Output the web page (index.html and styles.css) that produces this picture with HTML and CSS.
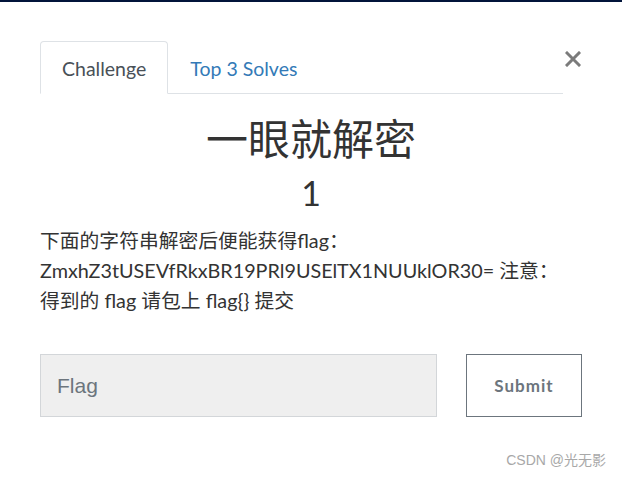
FILE: index.html
```html
<!DOCTYPE html>
<html lang="zh">
<head>
    <meta charset="UTF-8">
    <title>Challenge</title>
    <link rel="stylesheet" href="styles.css">
</head>
<body>
<div class="topbar"></div>
<div class="modal">
    <div class="modal-head">
        <ul class="tabs">
            <li class="tab active">Challenge</li>
            <li class="tab">Top 3 Solves</li>
        </ul>
        <button class="close" aria-label="Close">
            <svg width="16" height="16" viewBox="0 0 16 16">
                <path d="M2 2 L14 14 M14 2 L2 14" stroke="#7b7b7b" stroke-width="3" stroke-linecap="square"/>
            </svg>
        </button>
    </div>
    <h2 class="title">一眼就解密</h2>
    <h3 class="value">1</h3>
    <div class="desc">
        下面的字符串解密后便能获得flag：<br>
        ZmxhZ3tUSEVfRkxBR19PRl9USElTX1NUUklOR30= 注意：<br>
        得到的 flag 请包上 flag{} 提交
    </div>
    <div class="submit-row">
        <input type="text" class="flag-input" placeholder="Flag">
        <button class="submit">Submit</button>
    </div>
    <div class="footer">CSDN @光无影</div>
</div>
</body>
</html>
```

FILE: styles.css
```css
body, html {
    margin: 0;
    background: #fff;
    font-family: Lato, "Noto Sans CJK SC", sans-serif;
    color: #333;
}
.topbar {
    height: 2px;
    background: #01143a;
}
.modal {
    padding: 39px 40px 0 40px;
}
.modal-head {
    display: flex;
    align-items: flex-start;
}
.tabs {
    flex: 1;
    display: flex;
    list-style: none;
    margin: 0;
    padding: 0;
    border-bottom: 1px solid #dee2e6;
}
.tab {
    padding: 0 21px;
    height: 51px;
    line-height: 54px;
    font-size: 19.5px;
    color: #337ab7;
    border: 1px solid transparent;
    border-radius: 4px 4px 0 0;
    margin-bottom: -1px;
}
.tab.active {
    color: #495057;
    border-color: #dee2e6 #dee2e6 #fff;
    background: #fff;
}
.close {
    width: 18px;
    margin: 10px 0 0 1px;
    padding: 0;
    border: none;
    background: none;
    display: flex;
    justify-content: center;
}
.title {
    margin: 21px 0 0;
    text-align: center;
    font-size: 42px;
    font-weight: 400;
    line-height: 48px;
    color: #333;
}
.value {
    margin: 10px 0 0;
    text-align: center;
    font-size: 34px;
    font-weight: 400;
    line-height: 40px;
    color: #333;
}
.desc {
    margin-top: 12px;
    font-size: 19.8px;
    line-height: 30px;
    color: #333;
}
.submit-row {
    display: flex;
    gap: 29px;
    margin-top: 39px;
}
.flag-input {
    flex: 1;
    height: 63px;
    box-sizing: border-box;
    padding: 0 16px;
    font-family: "Liberation Sans", Arial, sans-serif;
    font-size: 21px;
    background: #efefef;
    border: 1px solid #d3d6d9;
    border-radius: 0;
    outline: none;
}
.flag-input::placeholder {
    color: #6c757d;
}
.submit {
    width: 116px;
    height: 63px;
    box-sizing: border-box;
    font-family: Lato, sans-serif;
    font-size: 17px;
    font-weight: 700;
    letter-spacing: 1px;
    color: #6c757d;
    background: #fff;
    border: 1px solid #6c757d;
    border-radius: 0;
}
.footer {
    display: flex;
    justify-content: flex-end;
    margin: 32px -24px 0 0;
    font-family: "Liberation Sans", "Noto Sans CJK SC", sans-serif;
    font-size: 14px;
    color: #a8a8a8;
}
```
